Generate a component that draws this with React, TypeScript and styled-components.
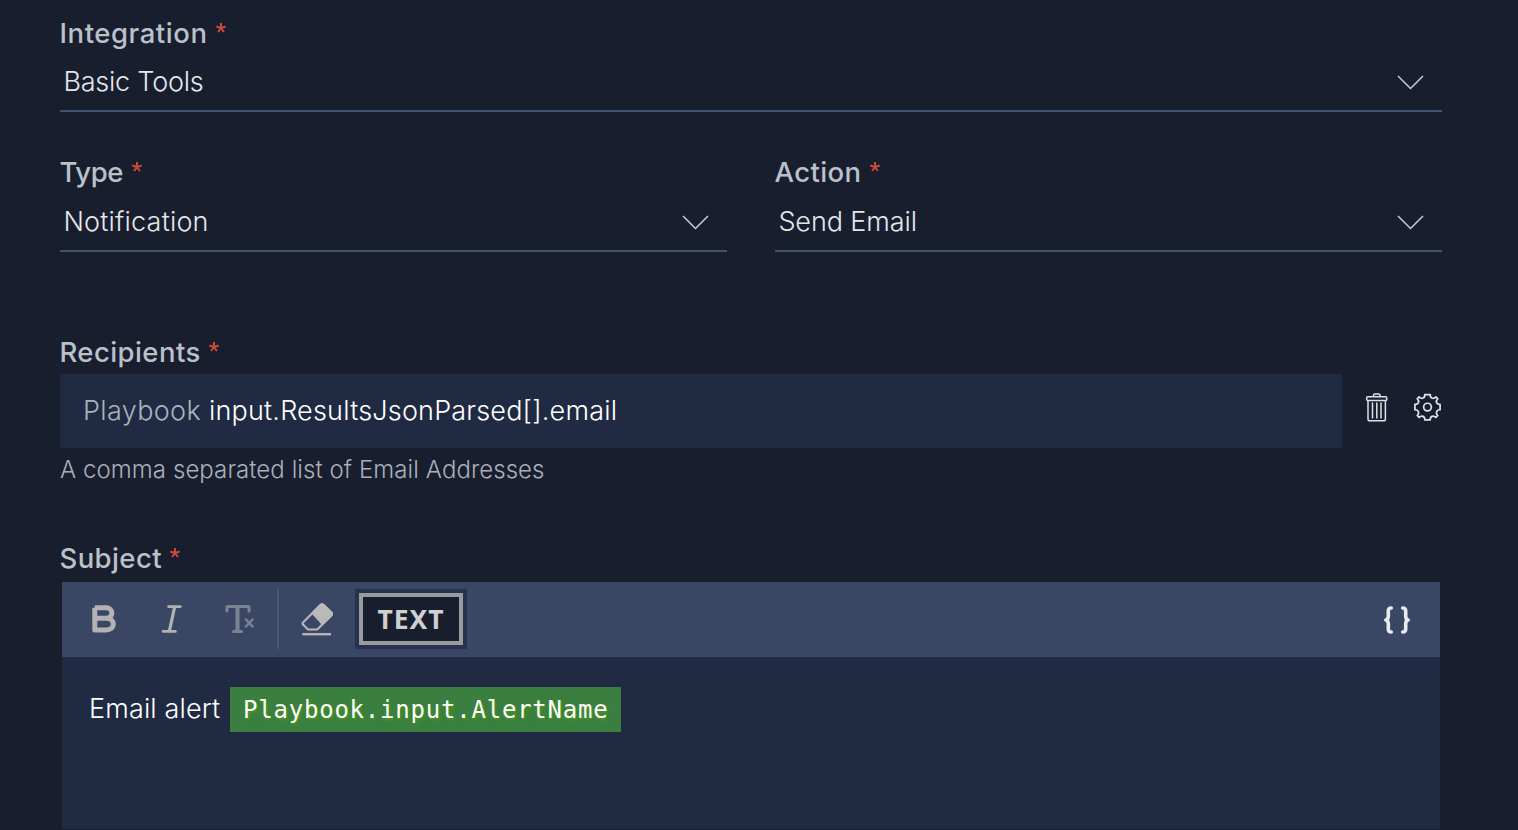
import React from "react";
import styled, { createGlobalStyle } from "styled-components";

const Global = createGlobalStyle`
  * { box-sizing: border-box; }
  html, body { margin: 0; background: #191e2f; }
  body { font-family: Inter, "Liberation Sans", sans-serif; overflow: hidden; }
`;

const Page = styled.main`
  width: 1518px;
  height: 830px;
  padding: 14px 76px 0 60px;
  overflow: hidden;
  background: #191e2f;
`;

const Label = styled.div<{ $ls?: number }>`
  display: flex;
  align-items: flex-start;
  height: 38px;
  margin-left: -0.5px;
  line-height: 38px;
  font-size: 27.5px;
  font-weight: 550;
  letter-spacing: ${(p) => p.$ls ?? 0}px;
  color: #b9c1c9;
  white-space: nowrap;
`;

const Star = styled.svg`
  width: 10px;
  height: 10px;
  margin: 9px 0 0 8.5px;
  stroke: #c94a38;
  stroke-width: 2;
  fill: none;
`;

const Select = styled.div<{ $ls?: number }>`
  display: flex;
  justify-content: space-between;
  height: 60px;
  padding: 10px 18px 0 3.4px;
  border-bottom: 2px solid #435171;
  line-height: 40px;
  font-size: 27px;
  font-weight: 300;
  letter-spacing: ${(p) => p.$ls ?? 0}px;
  color: #e4e7ea;
`;

const Chevron = styled.svg`
  width: 27px;
  height: 15px;
  margin-top: 13px;
  stroke: #c9ccd1;
  stroke-width: 1.5;
  fill: none;
`;

const Columns = styled.div`
  display: grid;
  grid-template-columns: 667px 667px;
  gap: 48px;
  margin: 41px 0 81px;

  ${Select} { height: 61px; padding-top: 11px; }
`;

const RecipientRow = styled.div`
  display: flex;
  margin-top: 3px;
  height: 74px;
`;

const RecipientInput = styled.div`
  flex: none;
  width: 1282px;
  padding-left: 23px;
  background: #202b43;
  line-height: 74px;
  font-size: 27px;
  white-space: nowrap;
  display: flex;
`;

const Scope = styled.span`
  width: 126px;
  font-weight: 300;
  letter-spacing: 0.35px;
  color: #a9b3bb;
`;

const Path = styled.span`
  font-weight: 350;
  letter-spacing: 0.19px;
  color: #fff;
`;

const RowIcons = styled.div`
  display: flex;
  flex: none;
  gap: 24px;
  padding: 18px 0 0 23px;
  svg { flex: none; fill: none; stroke: #dfe3e6; }
`;

const Helper = styled.p`
  margin: 4px 0 51px;
  height: 36px;
  line-height: 36px;
  font-size: 24px;
  font-weight: 300;
  letter-spacing: 0.07px;
  color: #aab0b9;
`;

const Editor = styled.section`
  width: 1378px;
  margin: 5px 0 0 2px;
  height: 247px;
  background: #202b43;
`;

const Toolbar = styled.div`
  display: flex;
  align-items: center;
  height: 75px;
  padding: 0 29px 1px;
  background: #3a4764;
`;

const Tool = styled.svg<{ $ml?: number }>`
  flex: none;
  margin-left: ${(p) => p.$ml ?? 0}px;
`;

const Divider = styled.i`
  width: 2px;
  height: 60px;
  margin-left: 22px;
  background: #4a5775;
`;

const TextButton = styled.button`
  width: 104px;
  height: 52px;
  margin-left: 25.5px;
  padding: 0;
  border: 4px solid #999a9b;
  box-shadow: 0 0 0 4px #263250;
  background: #191e2f;
  color: #cfd0d0;
  font: 700 26.5px/43px "Noto Sans", sans-serif;
  letter-spacing: 0.9px;
`;

const Braces = styled.svg`
  margin: 1px 0 0 auto;
  fill: none;
  stroke: #e8ebee;
`;

const Body = styled.div`
  display: flex;
  padding: 30px 27px;
  line-height: 45px;
  font-size: 27px;
  font-weight: 300;
  color: #fff;
`;

const Words = styled.span`
  width: 141px;
  height: 45px;
  line-height: 44px;
  letter-spacing: 0.15px;
`;

const Chip = styled.code`
  width: 391px;
  height: 45px;
  padding-left: 13px;
  background: #3a7f3f;
  font: 400 24px/47px "DejaVu Sans Mono", monospace;
  letter-spacing: 0.78px;
  text-shadow: 1px 2px 3px #4c9a12;
  white-space: nowrap;
`;

function Required() {
  return (
    <Star viewBox="0 0 10 10">
      <path d="M5 5V0M5 5L.3 3.5M5 5L9.7 3.5M5 5L2.1 9M5 5L7.9 9" />
    </Star>
  );
}

function Field({ label, value, ll, vl }: { label: string; value: string; ll: number; vl: number }) {
  return (
    <div>
      <Label $ls={ll}>{label}<Required /></Label>
      <Select $ls={vl}>
        {value}
        <Chevron viewBox="0 0 27 15"><path d="M1 1L13.5 13.5L26 1" /></Chevron>
      </Select>
    </div>
  );
}

export default function App() {
  return (
    <Page>
      <Global />
      <Field label="Integration" value="Basic Tools" ll={0.56} vl={-0.23} />
      <Columns>
        <Field label="Type" value="Notification" ll={-0.4} vl={0.2} />
        <Field label="Action" value="Send Email" ll={0.4} vl={-0.1} />
      </Columns>
      <Label $ls={0.42}>Recipients<Required /></Label>
      <RecipientRow>
        <RecipientInput>
          <Scope>Playbook</Scope>
          <Path>input.ResultsJsonParsed[].email</Path>
        </RecipientInput>
        <RowIcons>
          <svg width="24" height="32" viewBox="0 0 24 32" strokeWidth="1.5">
            <path d="M8.5 4.5V3.2Q8.5 2 10 2H13.5Q15 2 15 3.2V4.5" />
            <rect x="1.7" y="4.8" width="20" height="3.7" rx="1" />
            <path d="M3 9V27Q3 28.8 4.8 28.8H18.6Q20.4 28.8 20.4 27V9M7.5 10.5V26.5M11.8 10.5V26.5M16 10.5V26.5" />
          </svg>
          <svg width="29" height="31" viewBox="0 0 30 32" strokeWidth="1.8" strokeLinejoin="round">
            <path d="M12.2 2.6C12.5 6.3 9.2 7.8 6.3 5L4.4 7C7.2 9.6 5.6 13 2 12.8V18.2C5.6 18.2 7.2 21.6 4.4 24.3L6.3 26.3C9.2 23.5 12.5 25.2 12.2 28.8H17.8C17.5 25.2 20.8 23.5 23.7 26.3L25.6 24.3C22.8 21.6 24.4 18.2 28 18.2V12.8C24.4 13 22.8 9.6 25.6 7L23.7 5C20.8 7.8 17.5 6.3 17.8 2.6Z" />
            <circle cx="15" cy="15.6" r="4" />
          </svg>
        </RowIcons>
      </RecipientRow>
      <Helper>A comma separated list of Email Addresses</Helper>
      <Label $ls={0.4}>Subject<Required /></Label>
      <Editor>
        <Toolbar>
          <Tool width="26" height="30" viewBox="0 0 26 30" fill="none" stroke="#b3b3b3" strokeWidth="5" strokeLinejoin="round">
            <path d="M3.8 3.8H15C22.8 3.8 22.8 14.2 15 14.2H3.8M15 14.2C24.8 14.2 24.8 26 15 26H3.8V3.8" />
          </Tool>
          <Tool $ml={44} width="22" height="30" viewBox="0 0 22 30" fill="none" stroke="#b3b3b3" strokeWidth="2.6" strokeLinecap="round">
            <path d="M7.5 2.6H19.5M2 27.4H14.5" /><path d="M13.6 3L8.4 27" strokeWidth="3.2" />
          </Tool>
          <Tool $ml={42} width="30" height="32" viewBox="0 0 30 32" fill="none" stroke="#7b8393" strokeLinecap="round" strokeLinejoin="round">
            <path d="M2 8V3.5H24V8M8.5 28.5H16.5" strokeWidth="3" />
            <path d="M12.5 4V28" strokeWidth="4" />
            <path d="M21 16.5L27.5 23.5M27.5 16.5L21 23.5" strokeWidth="2.5" />
          </Tool>
          <Divider />
          <Tool $ml={20.5} width="34" height="36" viewBox="0 0 34 36" fill="none" stroke="#b9b9b9" strokeWidth="2" strokeLinejoin="round">
            <path d="M3 21.5L20.4 4Q22 2.5 23.6 4L31.4 11.5Q32.7 13 31.4 14.5L17.2 28.5H8L3 23.5Q2 22.5 3 21.5Z" />
            <path d="M12.5 12L20.4 4Q22 2.5 23.6 4L31.4 11.5Q32.7 13 31.4 14.5L22.5 23Z" fill="#b9b9b9" />
            <path d="M2.3 33.2H31" strokeWidth="2.3" />
          </Tool>
          <TextButton>TEXT</TextButton>
          <Braces width="28" height="30" viewBox="0 0 28 30" strokeWidth="3.6" strokeLinecap="round" strokeLinejoin="round">
            <path d="M8.3 3Q5.3 3 5.3 6V11Q5.3 14.5 2.8 15Q5.3 15.5 5.3 19V24Q5.3 27 8.3 27M19.7 3Q22.7 3 22.7 6V11Q22.7 14.5 25.2 15Q22.7 15.5 22.7 19V24Q22.7 27 19.7 27" />
          </Braces>
        </Toolbar>
        <Body>
          <Words>Email alert</Words>
          <Chip>Playbook.input.AlertName</Chip>
        </Body>
      </Editor>
    </Page>
  );
}
